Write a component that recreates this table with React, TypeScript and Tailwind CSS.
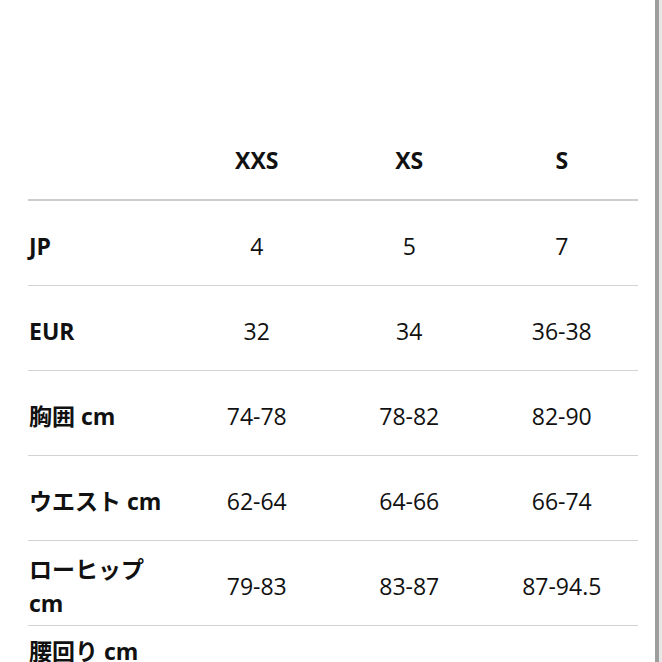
import React from "react";

const rows: { label: string; values: string[] }[] = [
  { label: "JP", values: ["4", "5", "7"] },
  { label: "EUR", values: ["32", "34", "36-38"] },
  { label: "胸囲 cm", values: ["74-78", "78-82", "82-90"] },
  { label: "ウエスト cm", values: ["62-64", "64-66", "66-74"] },
  { label: "ローヒップ cm", values: ["79-83", "83-87", "87-94.5"] },
];

export default function App() {
  return (
    <div className="flex h-[662px] w-[662px] overflow-hidden bg-white font-['Open_Sans','Noto_Sans_CJK_JP',sans-serif] text-[23px] leading-[34px] text-[#111111]">
      <div className="flex-1 bg-white pl-[28px]">
        <div className="w-[610px]">
          <div className="grid grid-cols-4 border-b-2 border-[#cdcdcd] pt-[143px] pb-[22px] font-bold">
            <div />
            <div className="text-center">XXS</div>
            <div className="text-center">XS</div>
            <div className="text-center">S</div>
          </div>
          {rows.map((r) => (
            <div
              key={r.label}
              className="grid h-[85px] grid-cols-4 items-center border-b border-[#d2d2d2] pt-[5px]"
            >
              <div className="pl-px pr-2 font-bold">{r.label}</div>
              {r.values.map((v, i) => (
                <div key={i} className="text-center">
                  {v}
                </div>
              ))}
            </div>
          ))}
          <div className="grid h-[85px] grid-cols-4 items-start pt-[8px]">
            <div className="pl-px pr-2 font-bold">腰回り cm</div>
            <div />
            <div />
            <div />
          </div>
        </div>
      </div>
      <div className="w-[4px] bg-[#9e9e9e]" />
      <div className="w-[3px] bg-[#e8e8e8]" />
    </div>
  );
}
